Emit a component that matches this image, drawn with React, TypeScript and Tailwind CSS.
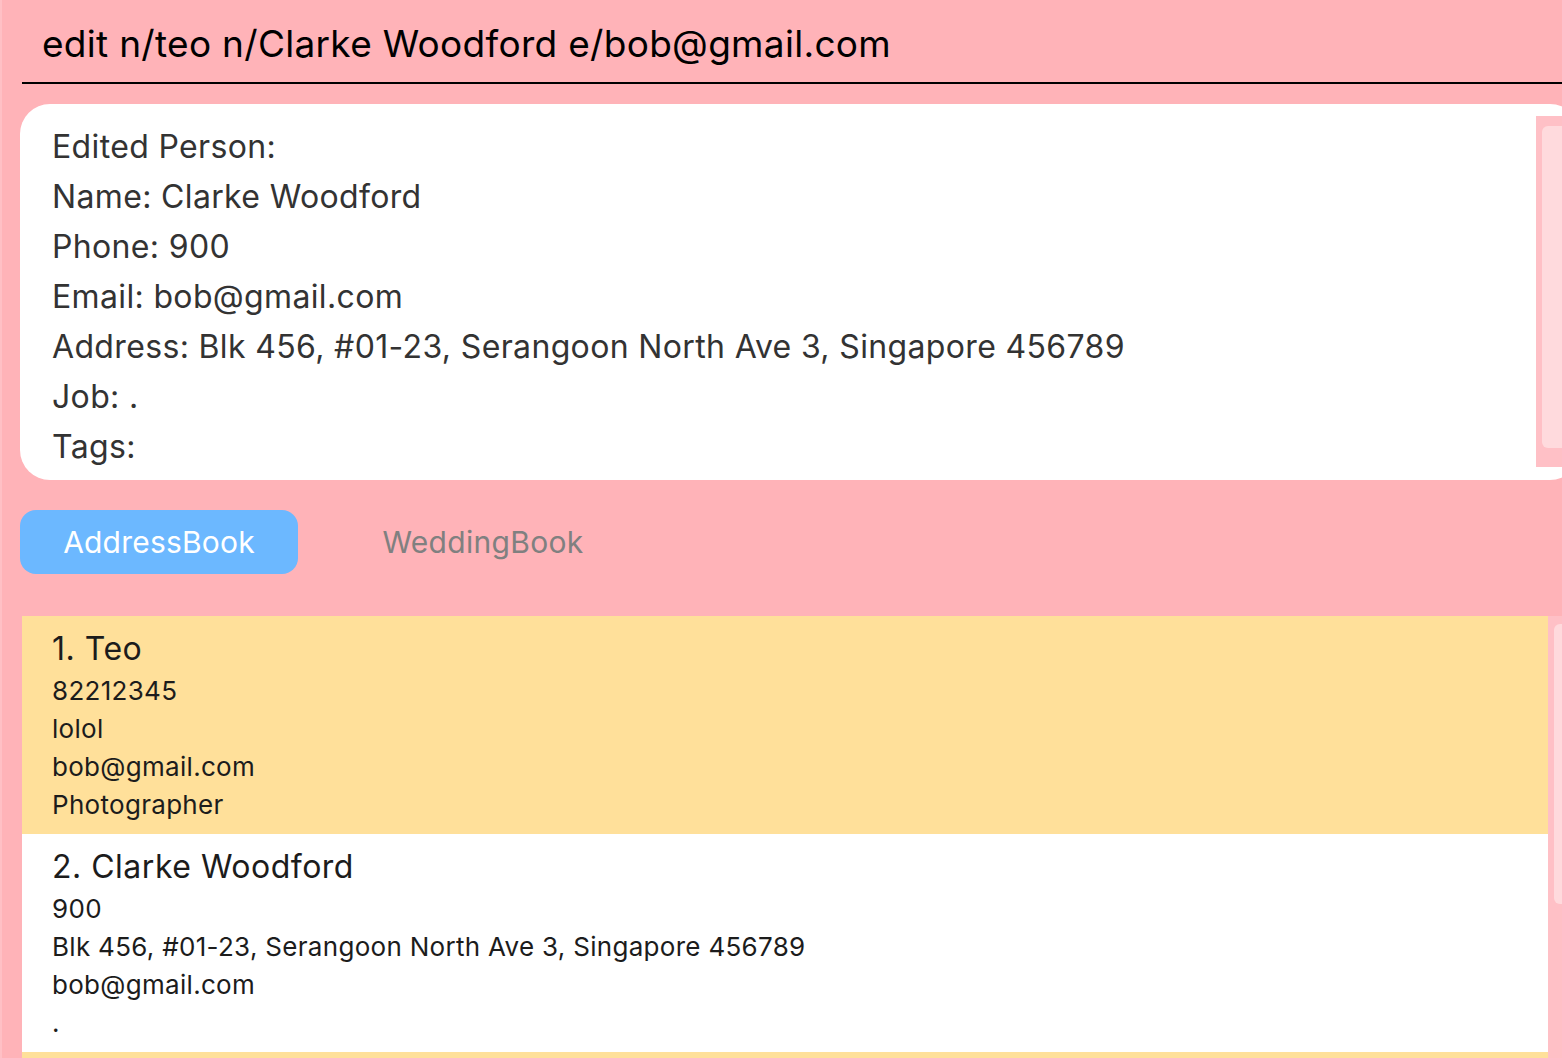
import React from "react";

const resultLines = [
  "Edited Person:",
  "Name: Clarke Woodford",
  "Phone: 900",
  "Email: bob@gmail.com",
  "Address: Blk 456, #01-23, Serangoon North Ave 3, Singapore 456789",
  "Job: .",
  "Tags:",
];

type Person = { name: string; lines: string[]; bg: string };

const people: Person[] = [
  {
    name: "1. Teo",
    lines: ["82212345", "lolol", "bob@gmail.com", "Photographer"],
    bg: "bg-[#FFE09A]",
  },
  {
    name: "2. Clarke Woodford",
    lines: ["900", "Blk 456, #01-23, Serangoon North Ave 3, Singapore 456789", "bob@gmail.com", "."],
    bg: "bg-white",
  },
];

const PersonCard: React.FC<{ p: Person }> = ({ p }) => (
  <div className={`${p.bg} pl-[30px] pt-[15px] pb-[10px] h-[218px] shrink-0`}>
    <div className="text-[32px] leading-[36px] tracking-[0.5px] text-[#1c1c1c]">{p.name}</div>
    <div className="mt-[5px] flex flex-col text-[26px] leading-[38px] tracking-[0.3px] text-[#1c1c1c]">
      {p.lines.map((l, i) => (
        <div key={i}>{l}</div>
      ))}
    </div>
  </div>
);

export default function App() {
  return (
    <div className="w-[1562px] h-[1058px] overflow-hidden bg-[#FFB3B8] border-l-2 border-[#FFC0C5] font-['Inter',sans-serif] flex flex-col">
      {/* command box */}
      <div className="ml-[20px] h-[84px] border-b-2 border-black pl-[20px] pt-[6px] flex items-center shrink-0">
        <span className="text-[37px] tracking-[0.3px] text-black">edit n/teo n/Clarke Woodford e/bob@gmail.com</span>
      </div>

      {/* result display */}
      <div className="mt-[20px] ml-[18px] w-[1560px] h-[376px] bg-white rounded-[30px] relative shrink-0">
        <div className="pl-[32px] pt-[18px] flex flex-col text-[32px] leading-[50px] tracking-[0.35px] text-[#333333]">
          {resultLines.map((l, i) => (
            <div key={i}>{l}</div>
          ))}
        </div>
        <div className="absolute left-[1516px] top-[12px] w-[40px] h-[351px] bg-[#FFC0C6]">
          <div className="ml-[6px] mt-[10px] w-[30px] h-[322px] rounded-[6px] bg-[#FFDADD]" />
        </div>
      </div>

      {/* tabs */}
      <div className="mt-[30px] ml-[18px] flex items-center gap-[46px] shrink-0">
        <div className="w-[278px] h-[64px] rounded-[16px] bg-[#6CB8FF] text-white text-[30px] tracking-[0.2px] flex items-center justify-center">
          AddressBook
        </div>
        <div className="w-[278px] h-[64px] text-[#808080] text-[30px] tracking-[0.3px] flex items-center justify-center">
          WeddingBook
        </div>
      </div>

      {/* person list */}
      <div className="mt-[42px] ml-[20px] flex flex-1 min-h-0">
        <div className="w-[1526px] shrink-0 flex flex-col overflow-hidden">
          {people.map((p) => (
            <PersonCard key={p.name} p={p} />
          ))}
          {/* next card, scrolled out of view */}
          <div className="bg-[#FFE09A] h-[218px] shrink-0" />
        </div>
        <div className="flex-1 bg-[#FFC0C6] pt-[8px] pl-[6px]">
          <div className="w-[20px] h-[280px] rounded-[6px] bg-[#FFDADD]" />
        </div>
      </div>
    </div>
  );
}
